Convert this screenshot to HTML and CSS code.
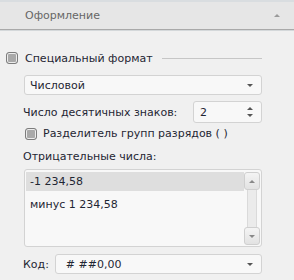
FILE: index.html
```html
<!DOCTYPE html>
<html lang="ru">
<head>
<meta charset="UTF-8">
<title>Оформление</title>
<link rel="stylesheet" href="styles.css">
</head>
<body>
<div class="top-strip"></div>
<div class="panel-header">
    <span class="panel-title">Оформление</span>
    <span class="collapse-arrow"></span>
</div>
<div class="panel-body">
    <div class="group-row">
        <span class="checkbox"></span>
        <span class="group-title">Специальный формат</span>
        <span class="group-line"></span>
    </div>
    <div class="indent">
        <div class="combo">
            <span class="combo-text">Числовой</span>
            <span class="drop-arrow"></span>
        </div>
        <div class="field-row">
            <span class="label">Число десятичных знаков:</span>
            <div class="spin">
                <span class="combo-text">2</span>
                <span class="spin-arrows">
                    <span class="arrow-up"></span>
                    <span class="arrow-down"></span>
                </span>
            </div>
        </div>
        <div class="check-row">
            <span class="checkbox"></span>
            <span class="label">Разделитель групп разрядов ( )</span>
        </div>
        <div class="label neg-label">Отрицательные числа:</div>
        <div class="listbox">
            <div class="list-items">
                <div class="list-item selected">-1 234,58</div>
                <div class="list-item">минус 1 234,58</div>
            </div>
            <div class="scrollbar">
                <span class="scroll-btn"><span class="arrow-up"></span></span>
                <span class="scroll-track"></span>
                <span class="scroll-btn"><span class="arrow-down"></span></span>
            </div>
        </div>
    </div>
    <div class="code-row">
        <span class="label">Код:</span>
        <div class="combo code-combo">
            <span class="combo-text">#&nbsp;##0,00</span>
            <span class="drop-arrow"></span>
        </div>
    </div>
</div>
</body>
</html>
```
FILE: styles.css
```css
html, body {
    margin: 0;
    padding: 0;
    width: 100%;
    height: 100%;
    background-color: #f0f0f0;
    font-family: "DejaVu Sans", sans-serif;
    font-size: 11px;
    color: #1f2633;
}
.top-strip {
    height: 2px;
    background-color: #d9dde0;
}
.panel-header {
    height: 27px;
    background-color: #e6e6e6;
    display: flex;
    align-items: center;
    justify-content: space-between;
    padding: 0 14px 0 25px;
    border-bottom: 1px solid #a9a9a9;
    box-shadow: 0 1px 0 #d4d8da;
}
.panel-title {
    color: #666;
}
.collapse-arrow {
    width: 0;
    height: 0;
    border-left: 3px solid transparent;
    border-right: 3px solid transparent;
    border-bottom: 3px solid #9a9a9a;
}
.panel-body {
    padding: 21px 32px 0 6px;
}
.group-row {
    display: flex;
    align-items: center;
    height: 14px;
}
.checkbox {
    width: 10px;
    height: 10px;
    border: 1px solid #7d7d7d;
    border-radius: 3px;
    background-color: #a9a9a9;
    box-shadow: inset 0 0 0 1px #ececec;
    flex-shrink: 0;
}
.group-title {
    margin-left: 7px;
}
.group-line {
    flex: 1;
    height: 1px;
    background-color: #c6c6c6;
    margin-left: 9px;
}
.indent {
    padding-left: 18px;
}
.combo {
    margin-top: 10px;
    height: 18px;
    border: 1px solid #d3d3d3;
    border-radius: 3px;
    background-color: #f8f8f8;
    display: flex;
    align-items: center;
    justify-content: space-between;
    padding: 0 8px 0 5px;
}
.drop-arrow {
    width: 0;
    height: 0;
    border-left: 3px solid transparent;
    border-right: 3px solid transparent;
    border-top: 3px solid #555;
}
.field-row {
    display: flex;
    align-items: center;
    justify-content: space-between;
    margin-top: 6px;
    padding-left: 0;
}
.label {
    margin-left: -1px;
}
.spin {
    width: 53px;
    height: 20px;
    border: 1px solid #d3d3d3;
    border-radius: 3px;
    background-color: #f8f8f8;
    display: flex;
    align-items: center;
    justify-content: space-between;
    padding: 0 8px 0 6px;
}
.spin-arrows {
    display: flex;
    flex-direction: column;
    gap: 4px;
}
.arrow-up {
    display: block;
    width: 0;
    height: 0;
    border-left: 3px solid transparent;
    border-right: 3px solid transparent;
    border-bottom: 3px solid #555;
}
.arrow-down {
    display: block;
    width: 0;
    height: 0;
    border-left: 3px solid transparent;
    border-right: 3px solid transparent;
    border-top: 3px solid #555;
}
.check-row {
    display: flex;
    align-items: center;
    margin-top: 4px;
    padding-left: 1px;
}
.check-row .label {
    margin-left: 6px;
}
.neg-label {
    margin-top: 10px;
}
.listbox {
    margin-top: 6px;
    height: 73px;
    border: 1px solid #d3d3d3;
    border-radius: 3px;
    background-color: #f8f8f8;
    display: flex;
    padding: 2px 1px 1px 1px;
}
.list-items {
    flex: 1;
}
.list-item {
    height: 19px;
    line-height: 19px;
    padding-left: 4px;
    margin-bottom: 4px;
}
.list-item.selected {
    background-color: #dedede;
}
.scrollbar {
    width: 16px;
    display: flex;
    flex-direction: column;
    align-items: center;
}
.scroll-btn {
    width: 14px;
    height: 16px;
    border: 1px solid #cfcfcf;
    border-radius: 3px;
    background: linear-gradient(#f4f4f4, #e2e2e2);
    display: flex;
    align-items: center;
    justify-content: center;
}
.scroll-btn .arrow-up {
    border-bottom-color: #888;
}
.scroll-btn .arrow-down {
    border-top-color: #888;
}
.scroll-track {
    flex: 1;
    width: 8px;
    background-color: #ebebeb;
    border-left: 1px solid #dadada;
    border-right: 1px solid #dadada;
}
.code-row {
    display: flex;
    align-items: center;
    margin-top: 7px;
    padding-left: 18px;
}
.code-row .combo {
    margin-top: 0;
}
.code-combo {
    flex: 1;
    margin-left: 6px;
    padding-left: 10px;
}
```
